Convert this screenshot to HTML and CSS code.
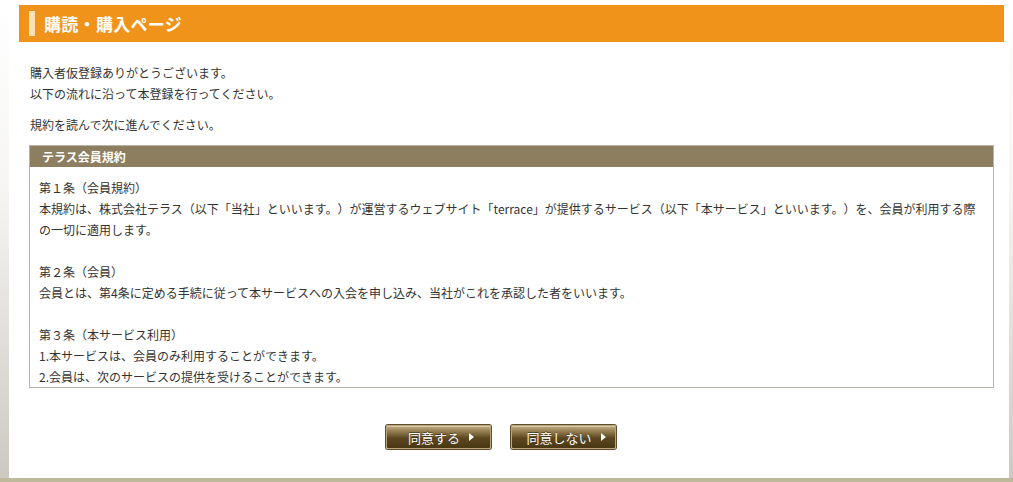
FILE: index.html
```html
<!DOCTYPE html>
<html lang="ja">
<head>
  <meta charset="UTF-8">
  <meta name="viewport" content="width=device-width, initial-scale=1.0">
  <title>購読・購入ページ</title>
  <link rel="stylesheet" href="styles.css">
</head>
<body>
  <div class="page">
    <h1 class="page-title">購読・購入ページ</h1>

    <div class="content">
      <p class="lead">購入者仮登録ありがとうございます。<br>以下の流れに沿って本登録を行ってください。</p>
      <p class="lead">規約を読んで次に進んでください。</p>

      <div class="terms">
        <h2 class="terms-title">テラス会員規約</h2>
        <div class="terms-body">
          <p>第１条（会員規約）<br>本規約は、株式会社テラス（以下「当社」といいます。）が運営するウェブサイト「terrace」が提供するサービス（以下「本サービス」といいます。）を、会員が利用する際<br>の一切に適用します。</p>
          <p>第２条（会員）<br>会員とは、第4条に定める手続に従って本サービスへの入会を申し込み、当社がこれを承認した者をいいます。</p>
          <p>第３条（本サービス利用）<br>1.本サービスは、会員のみ利用することができます。<br>2.会員は、次のサービスの提供を受けることができます。</p>
        </div>
      </div>

      <div class="actions">
        <button class="btn">同意する<span class="arrow"></span></button>
        <button class="btn">同意しない<span class="arrow"></span></button>
      </div>
    </div>
  </div>
  <footer class="foot"></footer>
</body>
</html>
```

FILE: styles.css
```css
body { margin: 0; padding: 0; font-family: "Noto Sans CJK JP", "Noto Sans", sans-serif; font-size: 12px; color: #333; text-spacing-trim: space-all; background: linear-gradient(to bottom, #ffffff 0%, #f6f5f3 40%, #cdc9c1 100%) no-repeat; background-size: 100% 478px; }
.page { width: 1000px; height: 478px; margin-left: 9px; background: #fff; padding: 5px 5px 0 10px; box-sizing: border-box; }
.page-title { margin: 0; height: 37px; background: #f0931a; color: #fff; font-size: 17px; font-weight: bold; line-height: 37px; padding-left: 25px; letter-spacing: 0.3px; position: relative; }
.page-title::before { content: ""; position: absolute; left: 10px; top: 6px; width: 6px; height: 25px; background: #fde0b6; }
.content { margin: 20px 10px 0 10px; }
.lead { margin: 0 0 10px 1px; line-height: 21px; }
.terms { border: 1px solid #b7b3a6; margin-top: 10px; }
.terms-title { margin: 0; background: #8c7e5f; color: #fff; font-size: 12px; font-weight: bold; height: 21px; line-height: 21px; padding-left: 12px; }
.terms-body { height: 200px; padding: 10px 9px 10px 9px; overflow-y: auto; scrollbar-width: none; line-height: 21px; }
.terms-body p { margin: 0 0 21px 0; }
.actions { display: flex; justify-content: center; gap: 20px; margin-top: 37px; padding-right: 22px; }
.btn { display: flex; align-items: center; justify-content: center; gap: 9px; box-sizing: content-box; width: 97px; height: 22px; padding: 0 0 0 6px; font-family: inherit; font-size: 13px; color: #fff; border: 1px solid #b9a67c; border-radius: 2px; background: linear-gradient(to bottom, #c2ae84 0%, #8a7346 30%, #5b4620 55%, #4a3812 100%); box-shadow: 0 0 0 1px #5f4d2a, inset 0 1px 0 rgba(255,255,255,0.35); text-shadow: 0 -1px 0 rgba(0,0,0,0.4); cursor: pointer; }
.arrow { width: 0; height: 0; border-left: 5px solid #fff; border-top: 4px solid transparent; border-bottom: 4px solid transparent; }
.foot { height: 4px; background: #bfb99c; }
```
